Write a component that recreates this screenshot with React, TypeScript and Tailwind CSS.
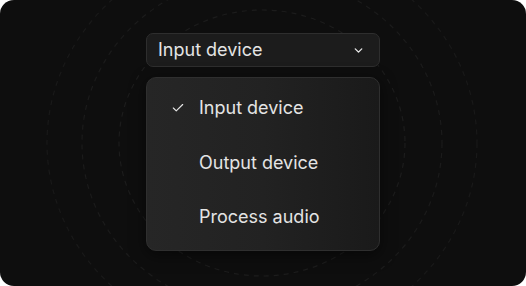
import { Check, ChevronDown } from "lucide-react";

const items = ["Input device", "Output device", "Process audio"];

function Rings() {
  return (
    <svg
      className="pointer-events-none absolute inset-0"
      width="526"
      height="286"
      viewBox="0 0 526 286"
      fill="none"
    >
      <ellipse cx="262" cy="143" rx="143" ry="133" stroke="#1c1c1c" strokeWidth="1.2" strokeDasharray="5 5" />
      <ellipse cx="262" cy="143" rx="180" ry="168" stroke="#1b1b1b" strokeWidth="1.2" strokeDasharray="5 5" />
      <ellipse cx="262" cy="143" rx="215" ry="200" stroke="#191919" strokeWidth="1.2" strokeDasharray="5 5" />
    </svg>
  );
}

export default function App() {
  return (
    <div className="h-[286px] w-[526px] bg-white">
      <div
        className="relative flex h-full w-full flex-col items-center overflow-hidden rounded-[14px] bg-[#0e0e0e] pt-[33px] text-[#e4e4e4]"
        style={{ fontFamily: "Inter, 'Noto Sans', sans-serif" }}
      >
        <Rings />
        <div className="relative flex h-[34px] w-[234px] shrink-0 items-center justify-between rounded-[7px] border border-[#2e2e2e] bg-[#1c1c1c] pl-[11px] pr-[14px]">
          <span className="text-[18px] leading-none">Input device</span>
          <ChevronDown className="h-[13px] w-[13px] text-[#e8e8e8]" strokeWidth={2.5} />
        </div>
        <div className="relative mt-[10px] flex h-[174px] w-[234px] shrink-0 flex-col rounded-[10px] border border-[#2f2f2f] bg-gradient-to-r from-[#262626] via-[#222222] to-[#1a1a1a] pt-[17px] shadow-[0_4px_16px_rgba(0,0,0,0.5)]">
          {items.map((label, i) => (
            <div key={label} className="flex h-[54.5px] shrink-0 items-start pl-[24px]">
              <span className="flex h-[26px] w-[28px] items-center">
                {i === 0 && <Check className="h-[14px] w-[14px] text-[#e4e4e4]" strokeWidth={2} />}
              </span>
              <span className="text-[18px] leading-[26px]">{label}</span>
            </div>
          ))}
        </div>
      </div>
    </div>
  );
}
